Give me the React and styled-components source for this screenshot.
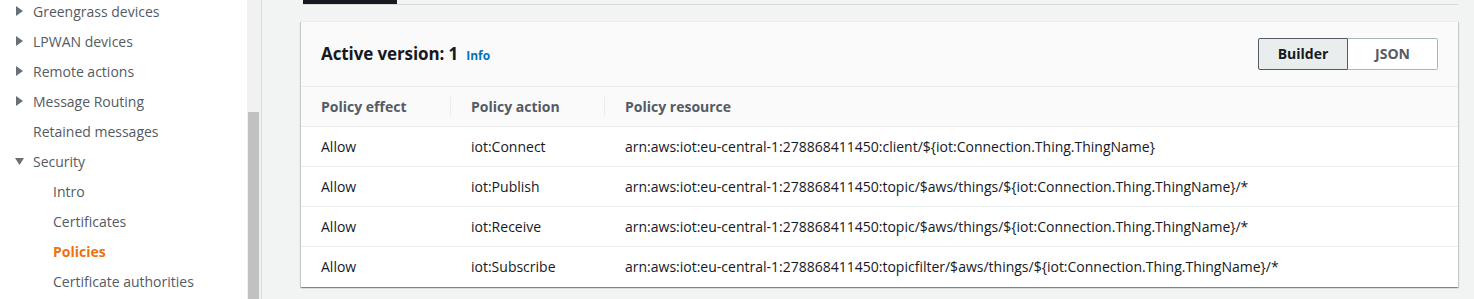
import React from "react";
import styled, { createGlobalStyle } from "styled-components";

const GlobalStyle = createGlobalStyle`
  html, body {
    margin: 0;
    padding: 0;
    background: #f2f3f3;
    font-family: "Open Sans", "Liberation Sans", Arial, sans-serif;
    -webkit-font-smoothing: antialiased;
  }
`;

const navItems = [
  { label: "Greengrass devices", arrow: "right", level: 0 },
  { label: "LPWAN devices", arrow: "right", level: 0 },
  { label: "Remote actions", arrow: "right", level: 0 },
  { label: "Message Routing", arrow: "right", level: 0 },
  { label: "Retained messages", level: 0 },
  { label: "Security", arrow: "down", level: 0 },
  { label: "Intro", level: 1 },
  { label: "Certificates", level: 1 },
  { label: "Policies", level: 1, active: true },
  { label: "Certificate authorities", level: 1 },
];

const statements = [
  {
    effect: "Allow",
    action: "iot:Connect",
    resource:
      "arn:aws:iot:eu-central-1:278868411450:client/${iot:Connection.Thing.ThingName}",
  },
  {
    effect: "Allow",
    action: "iot:Publish",
    resource:
      "arn:aws:iot:eu-central-1:278868411450:topic/$aws/things/${iot:Connection.Thing.ThingName}/*",
  },
  {
    effect: "Allow",
    action: "iot:Receive",
    resource:
      "arn:aws:iot:eu-central-1:278868411450:topic/$aws/things/${iot:Connection.Thing.ThingName}/*",
  },
  {
    effect: "Allow",
    action: "iot:Subscribe",
    resource:
      "arn:aws:iot:eu-central-1:278868411450:topicfilter/$aws/things/${iot:Connection.Thing.ThingName}/*",
  },
];

// 사이드바 펼침 화살표
function Caret({ dir }) {
  return (
    <svg width="9" height="10" viewBox="0 0 9 10">
      {dir === "down" ? (
        <polygon points="0,2 9,2 4.5,9" fill="#687078" />
      ) : (
        <polygon points="1,0 8,5 1,10" fill="#687078" />
      )}
    </svg>
  );
}

export default function App() {
  return (
    <>
      <GlobalStyle />
      <Page>
        <Sidebar>
          <NavList>
            {navItems.map((item) => (
              <NavItem key={item.label} $level={item.level} $active={item.active}>
                {item.arrow ? (
                  <CaretBox>
                    <Caret dir={item.arrow} />
                  </CaretBox>
                ) : null}
                {item.label}
              </NavItem>
            ))}
          </NavList>
        </Sidebar>
        <Scrollbar>
          <Thumb />
        </Scrollbar>
        <Main>
          <Tabs>
            <ActiveTab />
          </Tabs>
          <Card>
            <CardHeader>
              <Title>
                Active version: 1 <Info href="#">Info</Info>
              </Title>
              <Segmented>
                <Segment $selected>Builder</Segment>
                <Segment>JSON</Segment>
              </Segmented>
            </CardHeader>
            <Table>
              <thead>
                <tr>
                  <Th $w={149}>
                    <ThInner>Policy effect</ThInner>
                  </Th>
                  <Th $w={154} $sep>
                    <ThInner $pad={21}>Policy action</ThInner>
                  </Th>
                  <Th $sep>
                    <ThInner $pad={21}>Policy resource</ThInner>
                  </Th>
                </tr>
              </thead>
              <tbody>
                {statements.map((s) => (
                  <Tr key={s.action}>
                    <Td>{s.effect}</Td>
                    <Td $pad={21}>{s.action}</Td>
                    <Td $pad={21}>{s.resource}</Td>
                  </Tr>
                ))}
              </tbody>
            </Table>
          </Card>
        </Main>
      </Page>
    </>
  );
}

const Page = styled.div`
  display: flex;
  height: 299px;
  overflow: hidden;
`;

const Sidebar = styled.nav`
  width: 247px;
  flex: none;
  background: #ffffff;
  overflow: hidden;
`;

const NavList = styled.ul`
  list-style: none;
  margin: -4px 0 0;
  padding: 0;
`;

const NavItem = styled.li`
  display: flex;
  align-items: center;
  height: 30px;
  padding-left: ${(p) => (p.$level === 1 ? 53 : 33)}px;
  position: relative;
  font-size: 14px;
  color: ${(p) => (p.$active ? "#ec7211" : "#545b64")};
  font-weight: ${(p) => (p.$active ? 700 : 400)};
  white-space: nowrap;
`;

const CaretBox = styled.span`
  position: absolute;
  left: 15px;
  top: 10px;
  display: flex;
`;

const Scrollbar = styled.div`
  width: 14px;
  flex: none;
  background: #f1f1f1;
  border-right: 1px solid #dadcdc;
  position: relative;
`;

const Thumb = styled.div`
  position: absolute;
  left: 1px;
  width: 11px;
  top: 112px;
  bottom: 0;
  background: #c1c1c1;
`;

const Main = styled.main`
  flex: 1;
  padding: 0 16px 0 39px;
  min-width: 0;
`;

const Tabs = styled.div`
  height: 4px;
  border-bottom: 1px solid #d5dbdb;
  margin-left: 2px;
  display: flex;
`;

const ActiveTab = styled.div`
  width: 94px;
  height: 4px;
  background: #16191f;
`;

const Card = styled.section`
  margin-top: 16px;
  background: #ffffff;
  box-shadow: 0 1px 1px 0 rgba(0, 28, 36, 0.3), 1px 1px 1px 0 rgba(0, 28, 36, 0.15),
    -1px 1px 1px 0 rgba(0, 28, 36, 0.15);
  border-top: 1px solid #eaeded;
`;

const CardHeader = styled.div`
  display: flex;
  align-items: center;
  justify-content: space-between;
  height: 64px;
  padding: 0 20px;
  background: #fafafa;
  border-bottom: 1px solid #eaeded;
`;

const Title = styled.h2`
  margin: -2px 0 0;
  font-size: 17px;
  font-weight: 700;
  color: #16191f;
  display: flex;
  align-items: baseline;
  letter-spacing: -0.1px;
`;

const Info = styled.a`
  font-size: 12px;
  font-weight: 700;
  color: #0073bb;
  text-decoration: none;
  margin-left: 8px;
  letter-spacing: 0;
`;

const Segmented = styled.div`
  display: flex;
  margin-top: -1px;
`;

const Segment = styled.button`
  width: 90px;
  height: 32px;
  font-family: inherit;
  font-size: 14px;
  font-weight: 700;
  border: 1px solid ${(p) => (p.$selected ? "#545b64" : "#aab7b8")};
  background: ${(p) => (p.$selected ? "#eaeded" : "#ffffff")};
  color: ${(p) => (p.$selected ? "#16191f" : "#545b64")};
  border-radius: ${(p) => (p.$selected ? "2px 0 0 2px" : "0 2px 2px 0")};
  border-left-width: ${(p) => (p.$selected ? "1px" : "0")};
  padding: 0;
`;

const Table = styled.table`
  width: 100%;
  border-collapse: collapse;
  table-layout: fixed;
`;

const Th = styled.th`
  width: ${(p) => (p.$w ? `${p.$w}px` : "auto")};
  height: 39px;
  padding: 0;
  background: #fafafa;
  border-bottom: 1px solid #eaeded;
  text-align: left;
  font-size: 14px;
  font-weight: 700;
  color: #545b64;
  position: relative;
  &::before {
    content: "";
    display: ${(p) => (p.$sep ? "block" : "none")};
    position: absolute;
    left: 0;
    top: 10px;
    bottom: 10px;
    border-left: 1px solid #eaeded;
  }
`;

const ThInner = styled.div`
  padding-left: ${(p) => p.$pad || 20}px;
`;

const Tr = styled.tr`
  height: 40px;
  & + & td {
    border-top: 1px solid #eaeded;
  }
`;

const Td = styled.td`
  padding: 0 0 0 ${(p) => p.$pad || 20}px;
  font-size: 14px;
  color: #16191f;
  white-space: nowrap;
`;
